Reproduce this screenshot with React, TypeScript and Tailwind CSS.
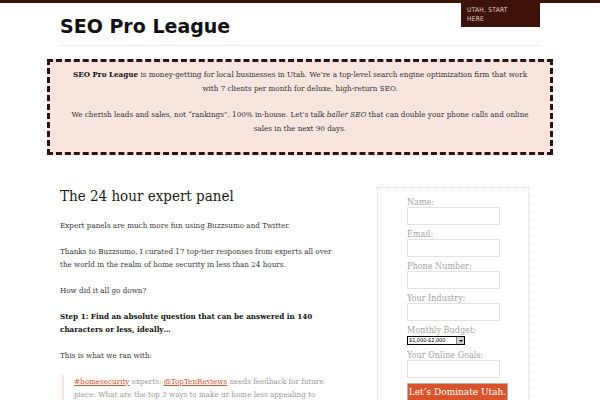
import React from "react";

const serif = "font-['DejaVu_Serif',serif] [font-stretch:condensed]";

function Label({ children, className = "" }: { children: React.ReactNode; className?: string }) {
  return <div className={`pt-[2px] text-[9px] leading-[10px] text-[#a3a3a3] ${className}`}>{children}</div>;
}

function Field({ label }: { label: string }) {
  return (
    <div className="mb-[2px]">
      <Label>{label}</Label>
      <div className="w-[93px] h-[18px] border border-[#e2e2e2] bg-white" />
    </div>
  );
}

export default function App() {
  return (
    <div className={`w-[600px] h-[400px] overflow-hidden bg-white border-t-[3px] border-[#3d1309] ${serif}`}>
      <div className="mx-[60px] h-[43px] flex justify-between border-b border-[#f6e6e1]">
        <div className="pt-[11px] text-[19px] leading-[24px] font-bold text-[#111] font-['DejaVu_Sans',sans-serif] [font-stretch:normal]">
          SEO Pro League
        </div>
        <div className="w-[79px] h-[24px] bg-[#3d1309] pl-[6px] pt-[3px] text-[6.5px] leading-[9px] tracking-[0.3px] text-[#e6cfc6] font-['DejaVu_Sans',sans-serif] uppercase">
          Utah, start
          <br />
          here
        </div>
      </div>

      <div className="mx-[47px] mt-[13px] h-[96px] border-[3px] border-dashed border-[#2a1510] bg-[#f9e5df] px-[10px] pt-[5px] text-center text-[8px] leading-[14px] text-[#333]">
        <p>
          <b className="text-[#111]">SEO Pro League</b> is money-getting for local businesses in Utah. We’re a top-level search engine optimization firm that work
          <br />
          with 7 clients per month for deluxe, high-return SEO.
        </p>
        <p className="mt-[12px]">
          We cherish leads and sales, not “rankings”. 100% in-house. Let’s talk <i>baller SEO</i> that can double your phone calls and online
          <br />
          sales in the next 90 days.
        </p>
      </div>

      <div className="mx-[60px] mt-[32px] flex">
        <div className="w-[285px] text-[8px] leading-[13px] text-[#383838]">
          <h1 className="text-[15px] leading-[20px] text-[#1a1a1a] mt-[-1px] mb-[13px]">The 24 hour expert panel</h1>
          <p className="mb-[13px]">Expert panels are much more fun using Buzzsumo and Twitter.</p>
          <p className="mb-[13px]">
            Thanks to Buzzsumo, I curated 17 top-tier responses from experts all over the world in the realm of home security in less than 24 hours.
          </p>
          <p className="mb-[13px]">How did it all go down?</p>
          <p className="mb-[13px] font-bold text-[#111]">
            Step 1: Find an absolute question that can be answered in 140 characters or less, ideally…
          </p>
          <p className="mb-[13px]">This is what we ran with:</p>
          <div className="ml-[2px] border-l-2 border-[#f6e3dd] pl-[10px] text-[#9a9a9a]">
            <p>
              <span className="text-[#d4532e] underline">#homesecurity</span> experts:{" "}
              <span className="text-[#d4532e] underline">@TopTenReviews</span> needs feedback for future piece: What are the top 3 ways to make ur home less appealing to
              burglars?
            </p>
          </div>
        </div>

        <div className="ml-[32px] w-[152px] h-[230px] border border-dotted border-[#d6d6d6] pl-[29px] pt-[7px]">
          <Field label="Name:" />
          <Field label="Email:" />
          <Field label="Phone Number:" />
          <Field label="Your Industry:" />
          <div>
            <Label>Monthly Budget:</Label>
            <div className="mt-[1px] w-[58px] h-[9px] border border-black bg-white flex items-center justify-between">
              <span className="pl-[1px] text-[5.5px] leading-[7px] text-black font-['DejaVu_Sans',sans-serif]">$1,000-$2,000</span>
              <span className="w-[8px] h-[7px] bg-[#d4d0c8] border-l border-[#888] flex items-center justify-center">
                <span className="block w-0 h-0 border-l-[2px] border-r-[2px] border-t-[2px] border-l-transparent border-r-transparent border-t-black" />
              </span>
            </div>
          </div>
          <Label className="mt-[3px]">Your Online Goals:</Label>
          <div className="w-[93px] h-[18px] border border-[#e2e2e2] bg-white" />
          <div className="mt-[5px] w-[101px] h-[18px] bg-[#d9532c] border border-[#b9b0ad] text-white text-[10px] leading-[16px] text-center">
            Let’s Dominate Utah.
          </div>
        </div>
      </div>
    </div>
  );
}
